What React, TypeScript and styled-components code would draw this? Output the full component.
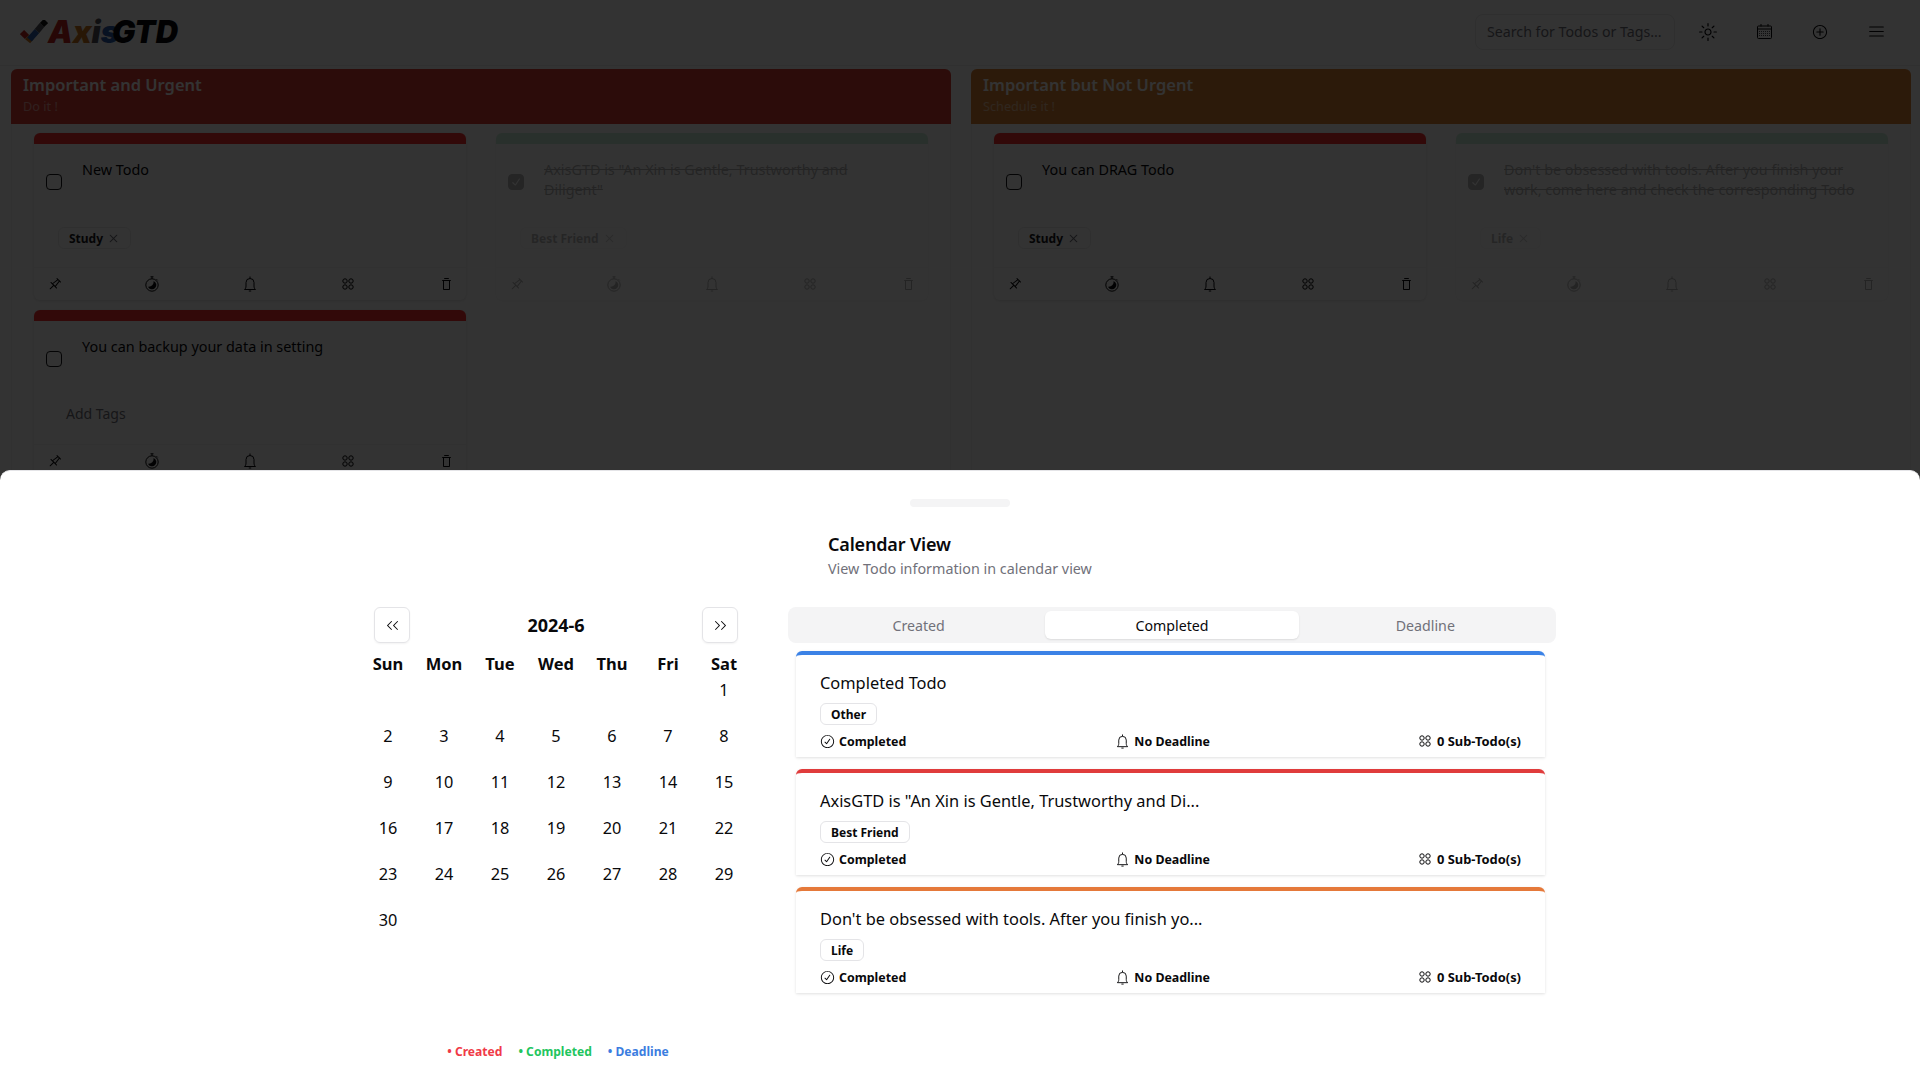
import React from "react";
import styled, { createGlobalStyle } from "styled-components";
import { RxSun, RxPlusCircled, RxHamburgerMenu, RxDrawingPin, RxTrash, RxCross2, RxCheckCircled, RxDoubleArrowLeft, RxDoubleArrowRight, RxCheck } from "react-icons/rx";

const Global = createGlobalStyle`
  * { box-sizing: border-box; }
  html, body { margin: 0; padding: 0; height: 100%; overflow: hidden; background: #fff; }
  body { font-family: "Noto Sans", "Open Sans", "Noto Sans CJK SC", sans-serif; color: #09090b; }
`;

const Page = styled.div`
  height: 100vh;
  overflow: hidden;
  background: #fff;
`;
const Header = styled.header`
  height: 66px;
  display: flex;
  align-items: center;
  justify-content: space-between;
  padding: 0 16px 2px 20px;
  border-bottom: 1px solid #f0f0f0;
`;
const Logo = styled.div`
  display: flex;
  align-items: center;
  height: 26px;
`;
const LogoText = styled.div`
  font-family: "Inter", sans-serif;
  font-weight: 900;
  font-style: italic;
  font-size: 31px;
  line-height: 26px;
  white-space: nowrap;
`;
const LogoPart = styled.span<{ $c: string; $ml?: number }>`
  color: ${(p) => p.$c};
  margin-left: ${(p) => p.$ml ?? 0}px;
`;
const Tools = styled.div`
  display: flex;
  align-items: center;
`;
const Search = styled.div`
  width: 200px;
  height: 36px;
  border: 1px solid #e8e8e8;
  border-radius: 8px;
  padding: 0 11px;
  display: flex;
  align-items: center;
  font-size: 14.2px;
  color: #71717a;
  white-space: nowrap;
  margin-right: 5px;
`;
const ToolButton = styled.div`
  width: 56px;
  height: 36px;
  display: flex;
  align-items: center;
  justify-content: center;
  color: #09090b;
`;
const Quadrants = styled.main`
  display: grid;
  grid-template-columns: 940px 940px;
  gap: 20px;
  padding: 3px 9px 0 11px;
`;
const Quadrant = styled.section`
  height: 1000px;
  border: 1px solid #f2f2f2;
  border-top: 0;
  border-radius: 6px 6px 0 0;
`;
const QuadrantHead = styled.div<{ $bg: string }>`
  height: 55px;
  margin: 0 -1px;
  background: ${(p) => p.$bg};
  border-radius: 6px 6px 0 0;
  padding: 4px 12px;
`;
const QuadrantTitle = styled.div`
  font-size: 16.5px;
  line-height: 24px;
  font-weight: 600;
  color: #fff;
`;
const QuadrantSub = styled.div`
  font-size: 12.7px;
  line-height: 18px;
  color: #ffffff;
  opacity: 0.5;
`;
const CardGrid = styled.div`
  display: grid;
  grid-template-columns: 432px 432px;
  column-gap: 30px;
  row-gap: 10px;
  padding: 9px 22px 0;
  align-items: start;
`;
const Card = styled.article<{ $done?: boolean }>`
  height: 167px;
  border-radius: 6px;
  background: #fff;
  box-shadow: 0 1px 3px rgba(0, 0, 0, 0.12);
  display: flex;
  flex-direction: column;
  opacity: ${(p) => (p.$done ? 0.3 : 1)};
`;
const Stripe = styled.div<{ $c: string }>`
  height: 11px;
  flex: none;
  background: ${(p) => p.$c};
  border-radius: 6px 6px 0 0;
`;
const CardBody = styled.div`
  height: 78px;
  display: flex;
  align-items: flex-start;
  padding: 16px 20px 0 12px;
  gap: 20px;
`;
const Check = styled.div<{ $on?: boolean }>`
  width: 16px;
  height: 16px;
  flex: none;
  margin-top: 14px;
  border: 1px solid #18181b;
  border-radius: 4px;
  display: flex;
  align-items: center;
  justify-content: center;
  background: ${(p) => (p.$on ? "#18181b" : "transparent")};
  color: #fff;
`;
const CardText = styled.div<{ $done?: boolean }>`
  font-size: 14.4px;
  line-height: 20px;
  text-decoration: ${(p) => (p.$done ? "line-through" : "none")};
`;
const TagRow = styled.div`
  height: 45px;
  padding: 5px 24px 0;
  display: flex;
  align-items: flex-start;
  justify-content: flex-start;
`;
const EditTag = styled.div`
  height: 22px;
  display: flex;
  align-items: center;
  gap: 4px;
  padding: 0 10px;
  border: 1px solid #ececec;
  border-radius: 6px;
  font-size: 12px;
  font-weight: 700;
  color: #18181b;
`;
const AddTags = styled.div`
  font-size: 14px;
  color: #71717a;
  margin-left: 8px;
  line-height: 20px;
`;
const CardFoot = styled.div`
  flex: 1;
  border-top: 1px solid #f4f4f4;
  display: flex;
  align-items: center;
  justify-content: space-between;
  padding: 0 12px;
  color: #09090b;
`;
const FootIcon = styled.span`
  width: 16px;
  height: 16px;
  display: flex;
  align-items: center;
  justify-content: center;
`;
const Overlay = styled.div`
  position: fixed;
  inset: 0;
  background: rgba(0, 0, 0, 0.8);
`;
const Drawer = styled.div`
  position: fixed;
  left: 0;
  right: 0;
  bottom: 0;
  height: 610px;
  background: #fff;
  border-top: 1px solid #e4e4e7;
  border-radius: 10px 10px 0 0;
  display: flex;
  flex-direction: column;
  align-items: center;
`;
const Handle = styled.div`
  width: 100px;
  height: 8px;
  margin-top: 28px;
  border-radius: 999px;
  background: #f4f4f5;
`;
const DrawerHead = styled.div`
  margin: 23px 0 0 2px;
  width: 266px;
`;
const DrawerTitle = styled.div`
  font-size: 18px;
  line-height: 28px;
  font-weight: 600;
  letter-spacing: -0.17px;
  color: #09090b;
`;
const DrawerSub = styled.div`
  font-size: 14.33px;
  line-height: 20px;
  margin-top: 1px;
  color: #71717a;
  white-space: nowrap;
`;
const Columns = styled.div`
  margin: 28px 4px 0 0;
  width: 1196px;
  display: grid;
  grid-template-columns: 392px 768px;
  gap: 36px;
`;
const CalendarPanel = styled.div`
  display: flex;
  flex-direction: column;
`;
const CalendarNav = styled.div`
  height: 36px;
  display: flex;
  align-items: center;
  justify-content: space-between;
  padding: 0 14px;
`;
const NavButton = styled.div`
  width: 36px;
  height: 36px;
  border: 1px solid #e4e4e7;
  border-radius: 6px;
  box-shadow: 0 1px 2px rgba(0, 0, 0, 0.05);
  display: flex;
  align-items: center;
  justify-content: center;
`;
const Month = styled.div`
  font-size: 18px;
  font-weight: 700;
`;
const DayGrid = styled.div`
  display: grid;
  grid-template-columns: repeat(7, 56px);
  grid-auto-rows: 46px;
`;
const Weekdays = styled.div`
  display: grid;
  grid-template-columns: repeat(7, 56px);
  height: 24px;
  margin-top: 9px;
`;
const Weekday = styled.div`
  font-size: 16.5px;
  font-weight: 700;
  line-height: 24px;
  text-align: center;
`;
const Day = styled.div`
  font-size: 16.3px;
  line-height: 28px;
  text-align: center;
`;
const Legend = styled.div`
  display: flex;
  justify-content: center;
  gap: 16px;
  margin: 91px 0 0 4px;
  font-size: 12.1px;
  font-weight: 700;
  line-height: 18px;
`;
const LegendItem = styled.span<{ $c: string }>`
  color: ${(p) => p.$c};
`;
const TabPanel = styled.div`
  display: flex;
  flex-direction: column;
`;
const Tabs = styled.div`
  height: 36px;
  background: #f4f4f5;
  border-radius: 8px;
  padding: 4px;
  display: grid;
  grid-template-columns: repeat(3, 1fr);
`;
const Tab = styled.div<{ $on?: boolean }>`
  border-radius: 6px;
  display: flex;
  align-items: center;
  justify-content: center;
  font-size: 14.2px;
  color: ${(p) => (p.$on ? "#09090b" : "#71717a")};
  background: ${(p) => (p.$on ? "#fff" : "transparent")};
  box-shadow: ${(p) => (p.$on ? "0 1px 2px rgba(0,0,0,.1)" : "none")};
`;
const ResultList = styled.div`
  display: flex;
  flex-direction: column;
  gap: 12px;
  margin-top: 8px;
  padding: 0 11px 0 8px;
`;
const Result = styled.div<{ $c: string }>`
  height: 106px;
  border-top: 4px solid ${(p) => p.$c};
  border-radius: 6px 6px 0 0;
  box-shadow: 0 1px 3px rgba(0, 0, 0, 0.12);
  padding: 16px 24px 0;
  display: flex;
  flex-direction: column;
  align-items: flex-start;
`;
const ResultTitle = styled.div`
  font-size: 16.4px;
  line-height: 24px;
  white-space: nowrap;
`;
const ResultTag = styled.div`
  margin-top: 8px;
  height: 22px;
  padding: 0 10px;
  border: 1px solid #e4e4e7;
  border-radius: 6px;
  display: flex;
  align-items: center;
  font-size: 12px;
  font-weight: 700;
`;
const ResultFoot = styled.div`
  align-self: stretch;
  display: flex;
  align-items: center;
  justify-content: space-between;
  margin-top: 5px;
  height: 22px;
`;
const Meta = styled.div<{ $wide?: boolean }>`
  display: flex;
  align-items: center;
  gap: ${(p) => (p.$wide ? 6 : 4)}px;
  font-size: ${(p) => (p.$wide ? 12.9 : 12.4)}px;
  font-weight: 700;
`;

const Timer = () => (
  <svg width="16" height="16" viewBox="0 0 16 16" fill="none" stroke="currentColor">
    <circle cx="8" cy="9" r="6.200" />
    <path d="M6.500 .8h3M8 .8v2M12.500 3.200l1.200 1.200" />
    <path d="M9.500 5a4.300 4.300 0 1 1-5.500 5.700 4.800 4.800 0 0 0 5.500-5.700z" fill="currentColor" stroke="none" />
  </svg>
);
const Bell = ({ size = 16 }: { size?: number }) => (
  <svg width={size} height={size} viewBox="0 0 16 16" fill="none" stroke="currentColor">
    <path d="M2.500 13.500c1-.8 1.500-1.800 1.500-3.500V6.500a4 4 0 0 1 8 0V10c0 1.700.5 2.700 1.500 3.500z" />
    <path d="M8 .5v2M6.800 15h2.400" />
  </svg>
);
const Group = ({ size = 12 }: { size?: number }) => (
  <svg width={size} height={size} viewBox="0 0 12 12" fill="none" stroke="currentColor">
    <circle cx="3" cy="3" r="2.200" />
    <circle cx="9" cy="3" r="2.200" />
    <circle cx="3" cy="9" r="2.200" />
    <circle cx="9" cy="9" r="2.200" />
  </svg>
);
const CalendarIcon = () => (
  <svg width="15" height="15" viewBox="0 0 15 15" fill="none" stroke="currentColor">
    <rect x=".5" y="2" width="14" height="12.500" rx="1" />
    <path d="M4 0v2.500M11 0v2.500M.5 5h14" />
    <path d="M2 7.500h11M2 9.500h11M2 11.500h11" strokeDasharray="1 1" opacity=".7" />
  </svg>
);
const LogoMark = () => (
  <svg width="28" height="24" viewBox="0 0 28 24" fill="none" strokeWidth="6">
    <path d="M2 12l5 5" stroke="#c2231f" />
    <path d="M7 17l5 4" stroke="#c9761f" />
    <path d="M9.500 19.500L17 11" stroke="#2a5aa8" />
    <path d="M17 11l5-6" stroke="#52525b" />
    <path d="M22 5l4-4" stroke="#111" />
  </svg>
);

const FootIcons = () => (
  <CardFoot>
    <FootIcon><RxDrawingPin size={15} /></FootIcon>
    <FootIcon><Timer /></FootIcon>
    <FootIcon><Bell /></FootIcon>
    <FootIcon><Group /></FootIcon>
    <FootIcon><RxTrash size={15} /></FootIcon>
  </CardFoot>
);

type CardData = { stripe: string; text: string; tag?: string; done?: boolean };

const TodoCard = ({ stripe, text, tag, done }: CardData) => (
  <Card $done={done}>
    <Stripe $c={stripe} />
    <CardBody>
      <Check $on={done}>{done && <RxCheck size={14} />}</Check>
      <CardText $done={done}>{text}</CardText>
    </CardBody>
    <TagRow>
      {tag ? (
        <EditTag>
          {tag}
          <RxCross2 size={13} color="#71717a" />
        </EditTag>
      ) : (
        <AddTags>Add Tags</AddTags>
      )}
    </TagRow>
    <FootIcons />
  </Card>
);

const left: CardData[] = [
  { stripe: "#f92d2d", text: "New Todo", tag: "Study" },
  { stripe: "#5fcf85", text: 'AxisGTD is "An Xin is Gentle, Trustworthy and Diligent"', tag: "Best Friend", done: true },
  { stripe: "#f92d2d", text: "You can backup your data in setting" },
];
const right: CardData[] = [
  { stripe: "#f92d2d", text: "You can DRAG Todo", tag: "Study" },
  { stripe: "#5fcf85", text: "Don't be obsessed with tools. After you finish your work, come here and check the corresponding Todo", tag: "Life", done: true },
];

const results = [
  { c: "#3b82e6", title: "Completed Todo", tag: "Other" },
  { c: "#e03c3c", title: 'AxisGTD is "An Xin is Gentle, Trustworthy and Di...', tag: "Best Friend" },
  { c: "#e5793a", title: "Don't be obsessed with tools. After you finish yo...", tag: "Life" },
];

const weekdays = ["Sun", "Mon", "Tue", "Wed", "Thu", "Fri", "Sat"];
const days: (number | null)[] = [null, null, null, null, null, null, ...Array.from({ length: 30 }, (_, i) => i + 1)];

export default function App() {
  return (
    <Page>
      <Global />
      <Header>
        <Logo>
          <LogoMark />
          <LogoText>
            <LogoPart $c="#c2231f">A</LogoPart>
            <LogoPart $c="#c9761f">x</LogoPart>
            <LogoPart $c="#52525b">i</LogoPart>
            <LogoPart $c="#2a5aa8">s</LogoPart>
            <LogoPart $c="#09090b" $ml={-7}>GTD</LogoPart>
          </LogoText>
        </Logo>
        <Tools>
          <Search>Search for Todos or Tags...</Search>
          <ToolButton><RxSun size={18} /></ToolButton>
          <ToolButton><CalendarIcon /></ToolButton>
          <ToolButton><RxPlusCircled size={16} /></ToolButton>
          <ToolButton><RxHamburgerMenu size={17} /></ToolButton>
        </Tools>
      </Header>
      <Quadrants>
        <Quadrant>
          <QuadrantHead $bg="#dc3c32">
            <QuadrantTitle>Important and Urgent</QuadrantTitle>
            <QuadrantSub>Do it !</QuadrantSub>
          </QuadrantHead>
          <CardGrid>{left.map((c) => <TodoCard key={c.text} {...c} />)}</CardGrid>
        </Quadrant>
        <Quadrant>
          <QuadrantHead $bg="#dc8232">
            <QuadrantTitle>Important but Not Urgent</QuadrantTitle>
            <QuadrantSub>Schedule it !</QuadrantSub>
          </QuadrantHead>
          <CardGrid>{right.map((c) => <TodoCard key={c.text} {...c} />)}</CardGrid>
        </Quadrant>
      </Quadrants>
      <Overlay />
      <Drawer>
        <Handle />
        <DrawerHead>
          <DrawerTitle>Calendar View</DrawerTitle>
          <DrawerSub>View Todo information in calendar view</DrawerSub>
        </DrawerHead>
        <Columns>
          <CalendarPanel>
            <CalendarNav>
              <NavButton><RxDoubleArrowLeft size={15} /></NavButton>
              <Month>2024-6</Month>
              <NavButton><RxDoubleArrowRight size={15} /></NavButton>
            </CalendarNav>
            <Weekdays>{weekdays.map((d) => <Weekday key={d}>{d}</Weekday>)}</Weekdays>
            <DayGrid>{days.map((d, i) => <Day key={i}>{d}</Day>)}</DayGrid>
            <Legend>
              <LegendItem $c="#f03a47">• Created</LegendItem>
              <LegendItem $c="#22c55e">• Completed</LegendItem>
              <LegendItem $c="#3b7de0">• Deadline</LegendItem>
            </Legend>
          </CalendarPanel>
          <TabPanel>
            <Tabs>
              <Tab>Created</Tab>
              <Tab $on>Completed</Tab>
              <Tab>Deadline</Tab>
            </Tabs>
            <ResultList>
              {results.map((r) => (
                <Result key={r.title} $c={r.c}>
                  <ResultTitle>{r.title}</ResultTitle>
                  <ResultTag>{r.tag}</ResultTag>
                  <ResultFoot>
                    <Meta><RxCheckCircled size={15} />Completed</Meta>
                    <Meta><Bell size={15} />No Deadline</Meta>
                    <Meta $wide><Group />0 Sub-Todo(s)</Meta>
                  </ResultFoot>
                </Result>
              ))}
            </ResultList>
          </TabPanel>
        </Columns>
      </Drawer>
    </Page>
  );
}
